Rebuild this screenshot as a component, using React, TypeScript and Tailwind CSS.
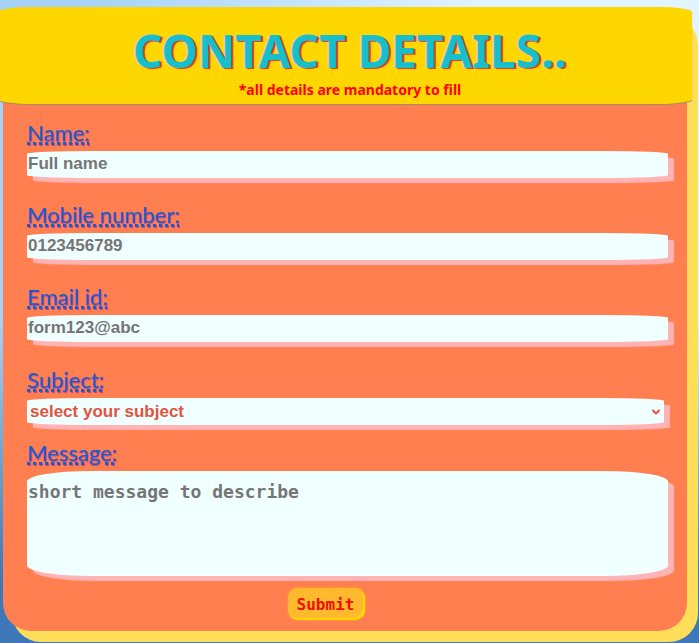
import type { ReactNode } from "react";
import { ChevronDown } from "lucide-react";

const control =
  "block rounded-[10%] bg-[#f0ffff] shadow-[6px_5px_1px_#ffb3b5] outline-none font-bold placeholder:text-[#757575] placeholder:opacity-100";
const textBox = control + " h-[27px] w-full px-px pb-0.5 font-['Liberation_Sans',sans-serif] text-[17px]";

function Field({ id, label, className, children }: { id: string; label: string; className: string; children: ReactNode }) {
  return (
    <div className={className}>
      <label
        htmlFor={id}
        className="mb-[7px] block w-fit font-['Lato',sans-serif] text-[22px] leading-[22px] text-[#1560c8] underline decoration-dotted decoration-[3px] underline-offset-1 [text-shadow:1px_1px_1px_#a01eb4a0]"
      >
        {label}
      </label>
      {children}
    </div>
  );
}

export default function App() {
  return (
    <div className="min-h-screen overflow-hidden bg-[linear-gradient(to_bottom,transparent_50%,#3f78b8_90%),linear-gradient(to_right,transparent_10%,#e2f4ff_70%)] pt-[7px] pr-3 pb-[11px] pl-[3px] bg-[#a5d2f6]">
      <form className="rounded-[28px] bg-[#ff7f50] pb-[11px] shadow-[10px_10px_0_1px_#ffdf5a]" onSubmit={(e) => e.preventDefault()}>
        <header className="-mx-[5px] h-[97px] rounded-[5%] bg-[#ffd700] pt-[17px] pl-[10px] text-center font-['Noto_Sans',sans-serif] font-bold shadow-[0_1px_1px_#a09060]">
          <h1 className="text-[46px] leading-[52px] text-[#18bfcb] [text-shadow:2px_1px_0_#f03c28,-1px_0_0_#d8c8b8]">CONTACT DETAILS..</h1>
          <p className="pt-1 text-sm leading-5 text-[#ff0000]">*all details are mandatory to fill</p>
        </header>
        <div className="pt-[18px] pr-[19px] pl-6">
          <Field id="name" label="Name:" className="h-[82px]">
            <input id="name" type="text" placeholder="Full name" className={textBox} />
          </Field>
          <Field id="mobile" label="Mobile number:" className="h-[82px]">
            <input id="mobile" type="tel" placeholder="0123456789" className={textBox} />
          </Field>
          <Field id="email" label="Email id:" className="h-[83px]">
            <input id="email" type="email" placeholder="form123@abc" className={textBox} />
          </Field>
          <Field id="subject" label="Subject:" className="h-[73px]">
            <div className="relative mr-1">
              <select id="subject" className={control + " h-[27px] w-full appearance-none px-[3px] font-['Liberation_Sans',sans-serif] text-[17px] text-[#e2543f]"}>
                <option>select your subject</option>
              </select>
              <ChevronDown className="pointer-events-none absolute top-2 right-0.5 size-3 text-[#e2543f]" strokeWidth={4} />
            </div>
          </Field>
          <Field id="message" label="Message:" className="">
            <textarea id="message" placeholder="short message to describe" className={control + " h-[105px] w-full resize-none px-px pt-[9px] font-['DejaVu_Sans_Mono',monospace] text-lg leading-6"} />
          </Field>
          <div className="flex justify-center pt-3 pr-[42px]">
            <button type="submit" className="h-8 w-[77px] rounded-[10px] bg-[#ffb92d] pt-0.5 pr-0.5 font-['DejaVu_Sans_Mono',monospace] text-base font-bold text-[#ee1100] shadow-[0_0_2px_#ffc814,inset_-2px_-2px_1px_#ffd700]">
              Submit
            </button>
          </div>
        </div>
      </form>
    </div>
  );
}
